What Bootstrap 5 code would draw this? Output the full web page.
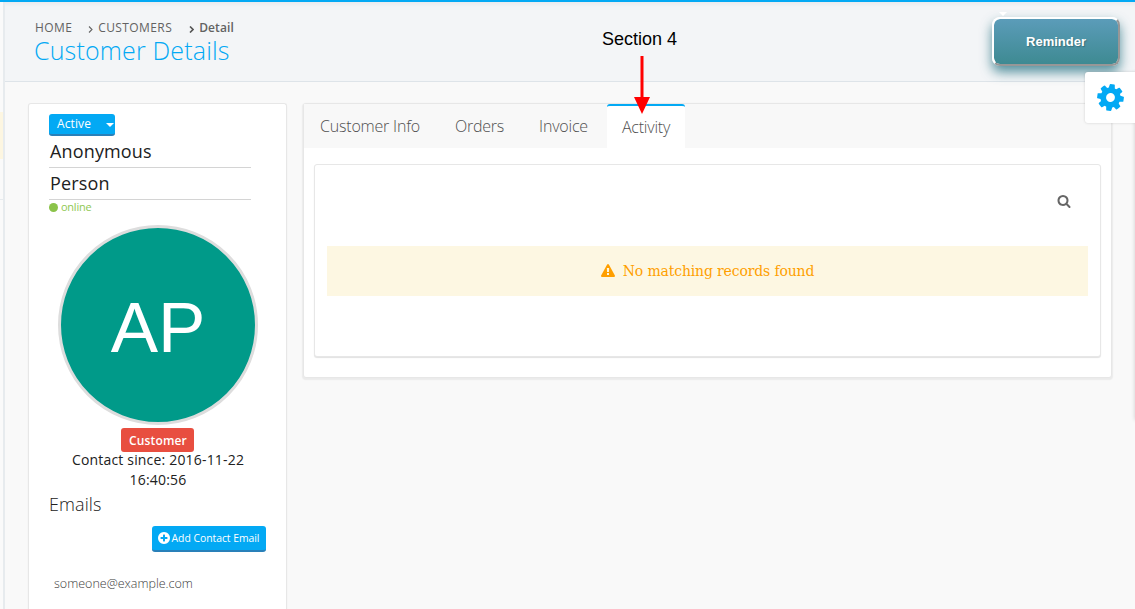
<!DOCTYPE html>
<html lang="en">
<head>
<meta charset="utf-8">
<meta name="viewport" content="width=device-width, initial-scale=1">
<title>Customer Details</title>
<link rel="stylesheet" href="https://cdn.jsdelivr.net/npm/bootstrap@5.3.0/dist/css/bootstrap.min.css">
<style>
  body { font-family: "Open Sans", sans-serif; font-size: 14px; line-height: 20px; color: #212121; background: #f9f9f9; height: 609px; overflow: hidden; }
  .app-shell { height: 609px; border-top: 2px solid #03a9f4; }
  .side-edge { width: 5px; background: #fafafa; border-right: 2px solid #e7ebee; }
  .side-edge .edge-top { height: 110px; }
  .side-edge .edge-active { height: 47px; background: #fdf6e1; }
  .side-edge .edge-item { height: 41px; border-bottom: 1px solid #e7ebee; }
  .page-head { height: 80px; background: #f3f5f7; border-bottom: 1px solid #dee4e9; padding: 16px 15px 0 30px; background-image: linear-gradient(#e9ebee, #f3f5f7 5px); }
  .breadcrumb { font-size: 12px; line-height: 18px; color: #626262; margin: 1px 0 0; }
  .crumb-link { letter-spacing: .4px; }
  .crumb-chev { width: 5px; height: 7px; margin: 7px 4px 0 17px; }
  .crumb-chev:first-of-type { margin: 7px 5px 0 16px; }
  .crumb-current { letter-spacing: .1px; margin-left: 1px; }
  .page-title { font-size: 25px; font-weight: 300; line-height: 28px; color: #03a9f4; margin: -1px 0 0 -1px; letter-spacing: .17px; }
  .btn-reminder { position: relative; width: 128px; height: 49px; border: 2px solid; border-color: #fff #979797 #979797 #fff !important; border-radius: 8px; background: linear-gradient(#5b9cb9, #3e8a92) padding-box; color: #fff; font: bold 13px/43px "Liberation Sans", Arial, sans-serif; text-shadow: 1px 1px 1px #39717e; box-shadow: 0 6px 12px rgba(30,110,125,.75); padding: 0; margin-top: -1px; }
  .btn-reminder:hover { color: #fff; }
  .btn-reminder::before { content: ""; position: absolute; left: 5px; top: -7px; border: 4px solid transparent; border-top-color: #fff; border-bottom: 0; }
  .settings-tab { position: absolute; right: 0; top: 72px; width: 50px; height: 51px; background: #fff; border-radius: 3px 0 0 3px; box-shadow: 0 0 3px rgba(0,0,0,.16); z-index: 3; }
  .settings-drawer { position: absolute; right: -20px; top: 72px; width: 20px; height: 348px; box-shadow: 0 0 4px rgba(0,0,0,.18); }
  .main-row { padding: 21px 23px 0; gap: 16px; }
  .panel { background: #fff; border: 1px solid #e7e7e7; border-radius: 3px; box-shadow: 0 1px 1px 1px #ebebeb; }
  .profile { width: 259px; height: 506px; padding: 10px 20px 0; flex: none; border-bottom: 0; border-bottom-left-radius: 0; border-bottom-right-radius: 0; box-shadow: 0 1px 1px #e2e2e2; }
  .btn-blue { background: #03a9f4; color: #fff; border: 0; border-bottom: 2px solid #2980b9; border-radius: 3px; padding: 0; }
  .status-btn { width: 66px; height: 22px; font-size: 12px; line-height: 20px; padding: 0 1px 0 8px; letter-spacing: .1px; }
  .status-btn::after { margin: 2px 0 0; border-top-width: 4px; border-left-width: 4px; border-right-width: 4px; }
  .name-line { width: 202px; height: 32px; border-bottom: 1px solid #d4d4d4; font-size: 18px; line-height: 31px; padding-left: 1px; letter-spacing: .15px; }
  .online { font-size: 11px; line-height: 14px; color: #8fc853; letter-spacing: -.25px; }
  .online-dot { width: 9px; height: 9px; background: #8bc34a; border-radius: 50%; margin-right: 3px; }
  .avatar { width: 200px; height: 200px; border: 3px solid #ddd; border-radius: 50%; background: #009a89; color: #fff; font: 71px/200px "Liberation Sans", Arial, sans-serif; margin: 11px 0 3px 9px; padding-top: 6px; }
  .tag-customer { width: 73px; height: 24px; background: #e84e40; color: #fff; border-radius: 3px; font-size: 12px; font-weight: 600; line-height: 25px; margin: 0 auto; letter-spacing: .15px; padding-left: 1px; }
  .contact-since { margin: -2px 0 0 1px; letter-spacing: .18px; }
  .emails-title { font-size: 18px; font-weight: 300; line-height: 24px; margin: 2px 0 10px; letter-spacing: .1px; }
  .add-email { width: 114px; height: 26px; font-size: 10.4px; line-height: 23px; white-space: nowrap; padding-right: 2px; }
  .add-email span { letter-spacing: -.03px; margin-left: 1px; }
  .email-text { font-size: 12.5px; color: #3d3d3d; margin: 22px 0 0 5px; font-weight: 300; }
  .content-panel { width: 809px; height: 275px; flex: none; }
  .nav-tabs { height: 44px; background: #f8f8f8; border: 0; padding: 0; }
  .nav-tabs .nav-link { border: 0; border-radius: 0; color: #505050; font-size: 16px; font-weight: 300; line-height: 24px; padding: 10px 0 0; height: 44px; text-align: center; letter-spacing: -.2px; }
  .nav-tabs .nav-link.active { border-top: 2px solid #03a9f4; color: #505050; background: #fff; border-radius: 3px 3px 0 0; padding-top: 9px; height: 44px; }
  .tab-a { width: 132px; } .tab-b { width: 87px; } .tab-c { width: 84px; } .tab-d { width: 78px; }
  .nav-tabs .tab-c { padding-right: 3px; }
  .inner-panel { height: 193px; margin: 16px 10px 0; padding: 29px 12px 0; box-shadow: 0 1px 1px #e2e2e2; }
  .search-row { padding-right: 17px; }
  .notice { height: 50px; margin-top: 38px; background: #fdf7e2; color: #ff9f00; font: 14px/50px "DejaVu Serif", serif; letter-spacing: -.15px; }
  .callout-label { position: absolute; left: 602px; top: 29px; font: 18px/20px "Liberation Sans", Arial, sans-serif; color: #000; white-space: nowrap; }
  .callout-arrow { position: absolute; left: 633px; top: 56px; z-index: 4; }
</style>
</head>
<body>
<div class="app-shell d-flex overflow-hidden">
  <aside class="side-edge flex-shrink-0">
    <div class="edge-top"></div><div class="edge-active"></div><div class="edge-item"></div>
  </aside>
  <div class="flex-grow-1">
    <header class="page-head d-flex justify-content-between">
      <div>
        <nav class="breadcrumb d-flex flex-nowrap" aria-label="breadcrumb">
          <span class="crumb-link">HOME</span>
          <svg class="crumb-chev" viewBox="0 0 5 7" fill="none" stroke="#666" stroke-width="1.1"><path d="M1 .5 4 3.5 1 6.5"/></svg>
          <span class="crumb-link">CUSTOMERS</span>
          <svg class="crumb-chev" viewBox="0 0 5 7" fill="none" stroke="#555" stroke-width="1.6"><path d="M1 .5 4 3.5 1 6.5"/></svg>
          <span class="crumb-current fw-semibold">Detail</span>
        </nav>
        <h1 class="page-title">Customer Details</h1>
      </div>
      <button class="btn btn-reminder">Reminder</button>
    </header>
    <main class="main-row d-flex">
      <section class="panel profile">
        <button class="btn btn-blue status-btn dropdown-toggle d-flex align-items-center justify-content-between">Active</button>
        <div class="name-line">Anonymous</div>
        <div class="name-line">Person</div>
        <div class="online d-flex align-items-center"><span class="online-dot"></span>online</div>
        <div class="avatar text-center d-flex align-items-center justify-content-center">AP</div>
        <div class="tag-customer text-center">Customer</div>
        <div class="contact-since text-center">Contact since: 2016-11-22<br>16:40:56</div>
        <h2 class="emails-title">Emails</h2>
        <div class="d-flex justify-content-end">
          <button class="btn btn-blue add-email d-flex align-items-center justify-content-center"><svg width="14" height="14" viewBox="0 0 1792 1792" fill="#fff"><path d="M1344 960v-128q0-26-19-45t-45-19h-256v-256q0-26-19-45t-45-19h-128q-26 0-45 19t-19 45v256h-256q-26 0-45 19t-19 45v128q0 26 19 45t45 19h256v256q0 26 19 45t45 19h128q26 0 45-19t19-45v-256h256q26 0 45-19t19-45zm320-64q0 209-103 385.500t-279.500 279.500-385.500 103-385.500-103-279.500-279.500-103-385.500 103-385.500 279.500-279.500 385.500-103 385.500 103 279.500 279.500 103 385.500z"/></svg><span>Add Contact Email</span></button>
        </div>
        <div class="email-text">someone@example.com</div>
      </section>
      <section class="panel content-panel">
        <ul class="nav nav-tabs">
          <li><a class="nav-link tab-a">Customer Info</a></li>
          <li><a class="nav-link tab-b">Orders</a></li>
          <li><a class="nav-link tab-c">Invoice</a></li>
          <li><a class="nav-link tab-d active">Activity</a></li>
        </ul>
        <div class="panel inner-panel">
          <div class="search-row d-flex justify-content-end">
            <svg width="14" height="14" viewBox="0 0 1792 1792" fill="#666"><path d="M1216 832q0-185-131.500-316.500t-316.500-131.500-316.500 131.500-131.500 316.500 131.500 316.500 316.500 131.500 316.500-131.500 131.500-316.500zm512 832q0 52-38 90t-90 38q-54 0-90-38l-343-342q-179 124-399 124-143 0-273.500-55.500t-225-150-150-225-55.500-273.500 55.500-273.500 150-225 225-150 273.500-55.500 273.500 55.500 225 150 150 225 55.500 273.500q0 220-124 399l343 343q37 37 37 90z"/></svg>
          </div>
          <div class="notice d-flex align-items-center justify-content-center">
            <svg width="14" height="14" viewBox="0 0 1792 1792" fill="#ff9f00" class="me-2"><path d="M1024 1375v-190q0-14-9.500-23.500t-22.500-9.500h-192q-13 0-22.500 9.500t-9.500 23.500v190q0 14 9.500 23.500t22.500 9.500h192q13 0 22.500-9.500t9.500-23.500zm-2-374l18-459q0-12-10-19-13-11-24-11h-220q-11 0-24 11-10 7-10 21l17 457q0 10 10 16.500t24 6.500h185q14 0 23.500-6.500t10.500-16.500zm-14-934l768 1408q35 63-2 126-17 29-46.500 46t-63.500 17h-1536q-34 0-63.500-17t-46.500-46q-37-63-2-126l768-1408q17-31 47-49t65-18 65 18 47 49z"/></svg>
            <span>No matching records found</span>
          </div>
        </div>
      </section>
    </main>
  </div>
</div>
<div class="settings-drawer"></div>
<div class="settings-tab d-flex align-items-center justify-content-center">
  <svg width="31" height="31" viewBox="0 0 1792 1792" fill="#03a9f4"><path transform="rotate(8 896 896)" d="M1152 896q0-106-75-181t-181-75-181 75-75 181 75 181 181 75 181-75 75-181zm512-109v222q0 12-8 23t-20 13l-185 28q-19 54-39 91 35 50 107 138 10 12 10 25t-9 23q-27 37-99 108t-94 71q-12 0-26-9l-138-108q-44 23-91 38-16 136-29 186-7 28-36 28h-222q-14 0-24.500-8.500t-11.500-21.500l-28-184q-49-16-90-37l-141 107q-10 9-25 9-14 0-25-11-126-114-165-168-7-10-7-23 0-12 8-23 15-21 51-66.500t54-70.500q-27-50-41-99l-183-27q-13-2-21-12.500t-8-23.500v-222q0-12 8-23t19-13l186-28q14-46 39-92-40-57-107-138-10-12-10-24 0-10 9-23 26-36 98.500-107.500t94.500-71.500q13 0 26 10l138 107q44-23 91-38 16-136 29-186 7-28 36-28h222q14 0 24.500 8.500t11.500 21.500l28 184q49 16 90 37l142-107q9-9 24-9 13 0 25 10 129 119 165 170 7 8 7 22 0 12-8 23-15 21-51 66.500t-54 70.500q26 50 41 98l183 28q13 2 21 12.500t8 23.500z"/></svg>
</div>
<div class="callout-label">Section 4</div>
<svg class="callout-arrow" width="18" height="60" viewBox="0 0 18 60"><path fill="#f00" d="M7.500 0h3v41H17L9 58 1 41h6.500z"/></svg>
<script src="https://cdn.jsdelivr.net/npm/bootstrap@5.3.0/dist/js/bootstrap.bundle.min.js"></script>
</body>
</html>
